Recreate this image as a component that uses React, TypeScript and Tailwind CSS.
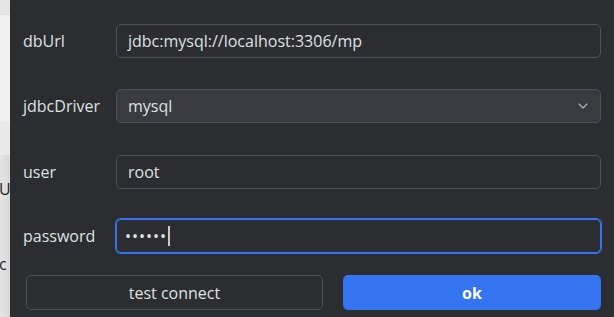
import { ChevronDown } from 'lucide-react';

const font = { fontFamily: '"Open Sans", "Noto Sans", sans-serif' };

function Row({ label, children, gap }: { label: string; children: React.ReactNode; gap: string }) {
  return (
    <div className={`flex items-center ${gap}`}>
      <div className="w-[93px] shrink-0 text-[16px] text-[#dfe1e5]">{label}</div>
      <div className="flex-1">{children}</div>
    </div>
  );
}

export default function App() {
  return (
    <div className="flex h-[317px] w-[614px] overflow-hidden" style={font}>
      {/* window behind the dialog */}
      <div className="flex w-[10px] shrink-0 flex-col overflow-hidden bg-[#ececec] text-[16px] text-[#1f1f1f]">
        <div className="h-[15px] bg-[#e3e3e3]" />
        <div className="h-[107px] bg-[#efefef]" />
        <div className="h-[33px] bg-[#e9e9e9]" />
        <div className="flex-1 bg-gradient-to-r from-[#e4e4e4] to-[#d8d8d8]">
          <div className="mt-[24px] -ml-[1px] whitespace-nowrap leading-[20px]">Ur</div>
          <div className="mt-[55px] -ml-[1px] leading-[20px]">c</div>
        </div>
      </div>

      <div className="flex-1 bg-[#2b2d30] pl-[13px] pr-[13px] pt-[24px]">
        <Row label="dbUrl" gap="">
          <div className="flex h-[34px] items-center rounded-[5px] border border-[#4e5157] px-[11px] text-[16px] text-[#dfe1e5]">
            jdbc:mysql://localhost:3306/mp
          </div>
        </Row>
        <Row label="jdbcDriver" gap="mt-[31px]">
          <div className="flex h-[34px] items-center justify-between rounded-[5px] border border-[#4e5157] bg-[#393b40] pl-[11px] pr-[9px] text-[16px] text-[#dfe1e5]">
            <span>mysql</span>
            <ChevronDown className="h-[16px] w-[16px] text-[#b4b8bf]" strokeWidth={1.6} />
          </div>
        </Row>
        <Row label="user" gap="mt-[32px]">
          <div className="flex h-[34px] items-center rounded-[5px] border border-[#4e5157] px-[11px] text-[16px] text-[#dfe1e5]">
            root
          </div>
        </Row>
        <Row label="password" gap="mt-[30px]">
          <div className="flex h-[34px] items-center rounded-[5px] border border-[#3574f0] px-[8px] text-[16px] text-[#dfe1e5] ring-1 ring-[#3574f0]">
            <span className="tracking-[1px]">••••••</span>
            <span className="ml-[1px] h-[20px] w-[2px] bg-[#c8c8c8]" />
          </div>
        </Row>

        <div className="mt-[22px] flex gap-[20px] pl-[3px]">
          <button className="h-[35px] w-[297px] rounded-[5px] border border-[#4e5157] text-[16px] text-[#dfe1e5]">
            test connect
          </button>
          <button className="h-[35px] flex-1 rounded-[5px] bg-[#3574f0] text-[16px] font-bold text-white">
            ok
          </button>
        </div>
      </div>
    </div>
  );
}
